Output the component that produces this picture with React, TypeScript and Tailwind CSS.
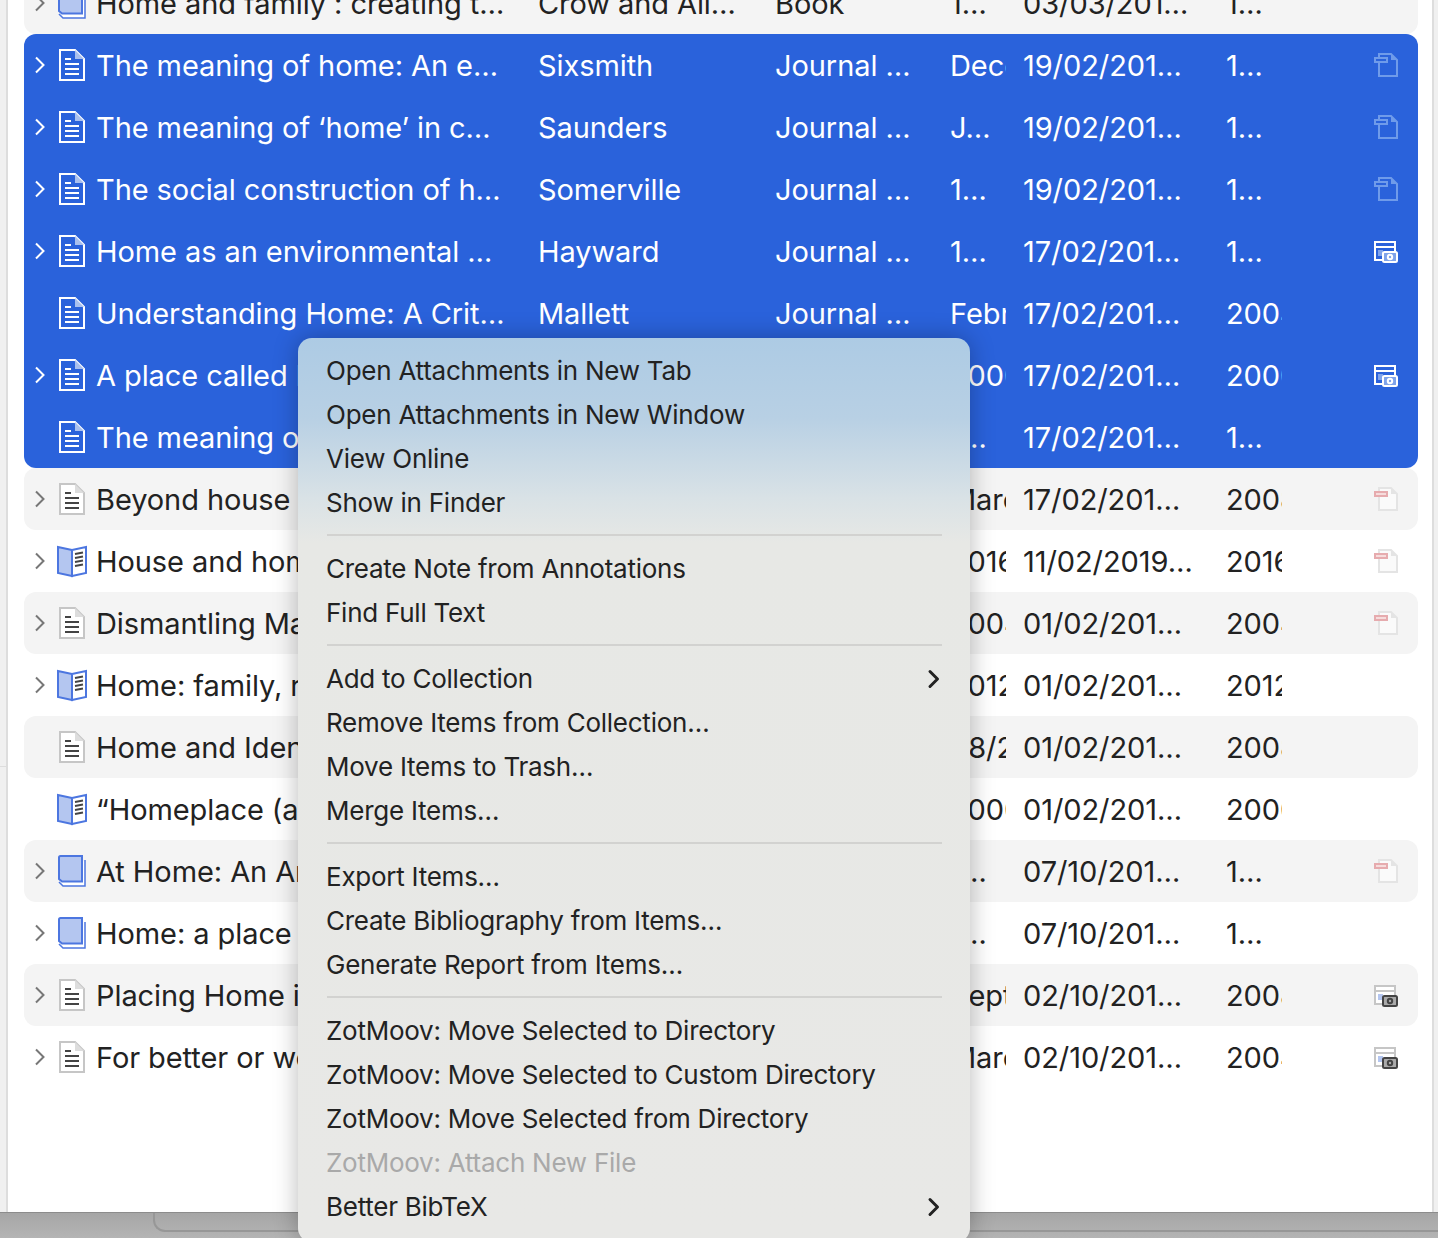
import React from "react";

type Kind = "doc" | "open" | "book";
type Att = "" | "tag" | "snap" | "red";
type Row = { t: string; c: string; p: string; d: string; a: string; y: string; k: Kind; ch: boolean; at: Att; s?: boolean };

const rows: Row[] = [
  { t: "Home and family : creating t…", c: "Crow and All…", p: "Book", d: "1…", a: "03/03/201…", y: "1…", k: "book", ch: true, at: "" },
  { t: "The meaning of home: An e…", c: "Sixsmith", p: "Journal …", d: "December", a: "19/02/201…", y: "1…", k: "doc", ch: true, at: "tag", s: true },
  { t: "The meaning of ‘home’ in c…", c: "Saunders", p: "Journal …", d: "J…", a: "19/02/201…", y: "1…", k: "doc", ch: true, at: "tag", s: true },
  { t: "The social construction of h…", c: "Somerville", p: "Journal …", d: "1…", a: "19/02/201…", y: "1…", k: "doc", ch: true, at: "tag", s: true },
  { t: "Home as an environmental …", c: "Hayward", p: "Journal …", d: "1…", a: "17/02/201…", y: "1…", k: "doc", ch: true, at: "snap", s: true },
  { t: "Understanding Home: A Crit…", c: "Mallett", p: "Journal …", d: "February", a: "17/02/201…", y: "2004", k: "doc", ch: false, at: "", s: true },
  { t: "A place called home", c: "Hayward", p: "Journal …", d: "2000", a: "17/02/201…", y: "2000", k: "doc", ch: true, at: "snap", s: true },
  { t: "The meaning of home", c: "Moore", p: "Journal …", d: "1…", a: "17/02/201…", y: "1…", k: "doc", ch: false, at: "", s: true },
  { t: "Beyond house and home", c: "Blunt", p: "Journal …", d: "March", a: "17/02/201…", y: "2008", k: "doc", ch: true, at: "red" },
  { t: "House and home", c: "Cieraad", p: "Book", d: "2016", a: "11/02/2019…", y: "2016", k: "open", ch: true, at: "red" },
  { t: "Dismantling Master", c: "Brickell", p: "Journal …", d: "2004", a: "01/02/201…", y: "2004", k: "doc", ch: true, at: "red" },
  { t: "Home: family, relations", c: "Blunt", p: "Book", d: "2012", a: "01/02/201…", y: "2012", k: "open", ch: true, at: "" },
  { t: "Home and Identity", c: "Dupuis", p: "Journal …", d: "08/2008", a: "01/02/201…", y: "2008", k: "doc", ch: false, at: "" },
  { t: "“Homeplace (a site)", c: "hooks", p: "Book", d: "2000", a: "01/02/201…", y: "2000", k: "open", ch: false, at: "" },
  { t: "At Home: An Anthology", c: "Bryson", p: "Book", d: "1…", a: "07/10/201…", y: "1…", k: "book", ch: true, at: "red" },
  { t: "Home: a place in the world", c: "Mack", p: "Book", d: "1…", a: "07/10/201…", y: "1…", k: "book", ch: true, at: "" },
  { t: "Placing Home in", c: "Mallett", p: "Journal …", d: "Sept", a: "02/10/201…", y: "2008", k: "doc", ch: true, at: "snap" },
  { t: "For better or worse", c: "Easthope", p: "Journal …", d: "March", a: "02/10/201…", y: "2004", k: "doc", ch: true, at: "snap" },
];

function Chevron({ s }: { s?: boolean }) {
  return (
    <svg width="12" height="18" viewBox="0 0 12 18" className="shrink-0">
      <path d="M2 1.5 9.5 9 2 16.5" fill="none" stroke={s ? "#ffffff" : "#777777"} strokeWidth="2" />
    </svg>
  );
}

function ItemIcon({ k, s }: { k: Kind; s?: boolean }) {
  if (k === "doc") {
    const line = s ? "#ffffff" : "#444444";
    const edge = s ? "#ffffff" : "#c6c6c6";
    return (
      <svg width="30" height="34" viewBox="0 0 30 34">
        <path d="M3 2H18L27 11V32H3Z" fill={s ? "none" : "#ffffff"} stroke={edge} strokeWidth="2" />
        <path d="M18 2V11H27Z" fill={s ? "#a9c0ee" : "#dddddd"} />
        <path d="M8 11H14M8 16H22M8 21H22M8 26H22" stroke={line} strokeWidth="2" />
      </svg>
    );
  }
  if (k === "open") {
    return (
      <svg width="30" height="34" viewBox="0 0 30 34">
        <path d="M15 6 1 3V29L15 32Z" fill="#b4c6f0" stroke="#4c76e0" strokeWidth="2" />
        <path d="M15 6 29 3V29L15 32Z" fill="#ffffff" stroke="#4c76e0" strokeWidth="2" />
        <path d="M18 10 26 8.5M18 14 26 12.5M18 18 26 16.5M18 22 26 20.5" stroke="#444444" strokeWidth="2" />
      </svg>
    );
  }
  return (
    <svg width="30" height="34" viewBox="0 0 30 34">
      <path d="M28 6V32H6L2 28" fill="#ffffff" stroke="#4c76e0" strokeWidth="1.5" />
      <path d="M2 3.5Q2 2 3.5 2H25V27.5H5L2 25Z" fill="#b4c6f0" stroke="#4c76e0" strokeWidth="2" />
    </svg>
  );
}

function AttachIcon({ a, s }: { a: Att; s?: boolean }) {
  if (a === "snap") {
    const edge = s ? "#ffffff" : "#c6c6c6";
    const cam = s ? "#ffffff" : "#444444";
    return (
      <svg width="24" height="24" viewBox="0 0 24 24">
        <path d="M1 3H21V21H1Z" fill={s ? "none" : "#ffffff"} stroke={edge} strokeWidth="2" />
        <path d="M1 8H21" stroke={edge} strokeWidth="2" />
        <path d="M4 11H9V17H4Z" fill={s ? "#7fa3ea" : "#b4c6f0"} />
        <rect x="9" y="13" width="14" height="10" rx="1.5" fill={s ? "#7fa3ea" : "#aaaaaa"} stroke={cam} strokeWidth="2" />
        <circle cx="16" cy="18" r="2.2" fill="none" stroke={cam} strokeWidth="2" />
      </svg>
    );
  }
  const edge = a === "tag" ? "#6f9bea" : "#e4e4e4";
  const tag = a === "tag" ? "#6f9bea" : "#e6abae";
  const bar = a === "tag" ? "#2a62db" : "#f6dcdc";
  return (
    <svg width="24" height="24" viewBox="0 0 24 24">
      <path d="M5 1H17L23 7V23H5Z" fill={a === "tag" ? "none" : "#fafafa"} stroke={edge} strokeWidth="2" />
      <path d="M17 1V7H23Z" fill={a === "tag" ? "#6f9bea" : "#e4e4e4"} />
      <rect x="0" y="4" width="14" height="6" fill={tag} />
      <rect x="2" y="6" width="10" height="2" fill={bar} />
    </svg>
  );
}

function Cell({ w, children }: { w: string; children: React.ReactNode }) {
  return <div className={`${w} shrink-0 overflow-hidden whitespace-nowrap pt-[2px]`}>{children}</div>;
}

function ListRow({ r, i }: { r: Row; i: number }) {
  const alt = i % 2 === 0;
  let shape = "rounded-xl";
  if (r.s) {
    shape = "bg-[#2a62db] text-white";
    if (i === 1) shape += " rounded-t-xl";
    if (i === 7) shape += " rounded-b-xl";
  } else {
    shape += alt ? " bg-[#f4f4f4] text-[#222222]" : " text-[#222222]";
  }
  return (
    <div className={`flex h-[62px] items-center text-[29px] leading-[60px] tracking-[-0.08px] ${shape}`}>
      <div className="flex w-[32px] shrink-0 justify-start pl-[10px]">{r.ch && <Chevron s={r.s} />}</div>
      <div className="flex w-[40px] shrink-0 justify-start pl-[1px]">
        <ItemIcon k={r.k} s={r.s} />
      </div>
      <Cell w="w-[442px] pr-[12px]">{r.t}</Cell>
      <Cell w="w-[237px] pr-[10px]">{r.c}</Cell>
      <Cell w="w-[175px]">{r.p}</Cell>
      <Cell w="w-[56px]">{r.d}</Cell>
      <div className="w-[17px] shrink-0" />
      <Cell w="w-[203px]">{r.a}</Cell>
      <Cell w="w-[56px]">{r.y}</Cell>
      <div className="flex w-[136px] shrink-0 justify-start pl-[92px]">
        {r.at && <AttachIcon a={r.at} s={r.s} />}
      </div>
    </div>
  );
}

const menu: (string | { t: string; sub?: boolean; off?: boolean })[][] = [
  ["Open Attachments in New Tab", "Open Attachments in New Window", "View Online", "Show in Finder"],
  ["Create Note from Annotations", "Find Full Text"],
  [{ t: "Add to Collection", sub: true }, "Remove Items from Collection…", "Move Items to Trash…", "Merge Items…"],
  ["Export Items…", "Create Bibliography from Items…", "Generate Report from Items…"],
  [
    "ZotMoov: Move Selected to Directory",
    "ZotMoov: Move Selected to Custom Directory",
    "ZotMoov: Move Selected from Directory",
    { t: "ZotMoov: Attach New File", off: true },
    { t: "Better BibTeX", sub: true },
  ],
];

function ContextMenu() {
  return (
    <div className="absolute left-[298px] top-[338px] h-[904px] w-[672px] rounded-[14px] bg-[linear-gradient(180deg,#adcbe4_0px,#b8d0e4_80px,#d9e2e6_160px,#e7e8e5_205px,#e8e8e6_100%)] pl-[29px] pr-[28px] pt-[11px] text-[26px] leading-[44px] tracking-[-0.25px] text-[#222222] shadow-[0_0_24px_rgba(0,0,0,0.28)]">
      {menu.map((group, gi) => (
        <div key={gi}>
          {gi > 0 && (
            <div className="flex h-[22px] items-center pb-[2px]">
              <div className="h-[2px] w-full bg-[#d2d2d0]" />
            </div>
          )}
          {group.map((it, ii) => {
            const o = typeof it === "string" ? { t: it } : it;
            return (
              <div key={ii} className={`flex h-[44px] items-center justify-between whitespace-nowrap ${o.off ? "text-[#a9a9a9]" : ""}`}>
                <span className="-ml-[1px]">{o.t}</span>
                {o.sub && (
                  <svg width="14" height="20" viewBox="0 0 14 20" className="mr-[1px]">
                    <path d="M3 2.5 10.5 10 3 17.5" fill="none" stroke="#222222" strokeWidth="3" strokeLinecap="round" strokeLinejoin="round" />
                  </svg>
                )}
              </div>
            );
          })}
        </div>
      ))}
    </div>
  );
}

export default function App() {
  return (
    <div className="relative flex h-[1238px] w-[1438px] flex-col overflow-hidden bg-white font-['Inter','Liberation_Sans',sans-serif]">
      <div className="flex h-[1212px] shrink-0">
        <div className="w-[8px] shrink-0 border-r-2 border-[#dddddd] bg-[#f0f0f0]">
          <div className="h-[767px] border-b border-[#dddddd]" />
        </div>
        <div className="min-w-0 flex-1 overflow-hidden pl-[16px] pr-[14px]">
          <div className="-mt-[28px]">
            {rows.map((r, i) => (
              <ListRow key={i} r={r} i={i} />
            ))}
          </div>
        </div>
        <div className="w-[6px] shrink-0 border-l-2 border-[#dddddd] bg-[#f0f0f0]" />
      </div>
      <div className="h-[26px] shrink-0 border-t border-[#8c8c8c] bg-[linear-gradient(180deg,#a6a6a6,#b4b4b4)]">
        <div className="ml-[153px] h-[19px] rounded-bl-xl border-b-2 border-l-2 border-[#979797]" />
      </div>
      <ContextMenu />
    </div>
  );
}
